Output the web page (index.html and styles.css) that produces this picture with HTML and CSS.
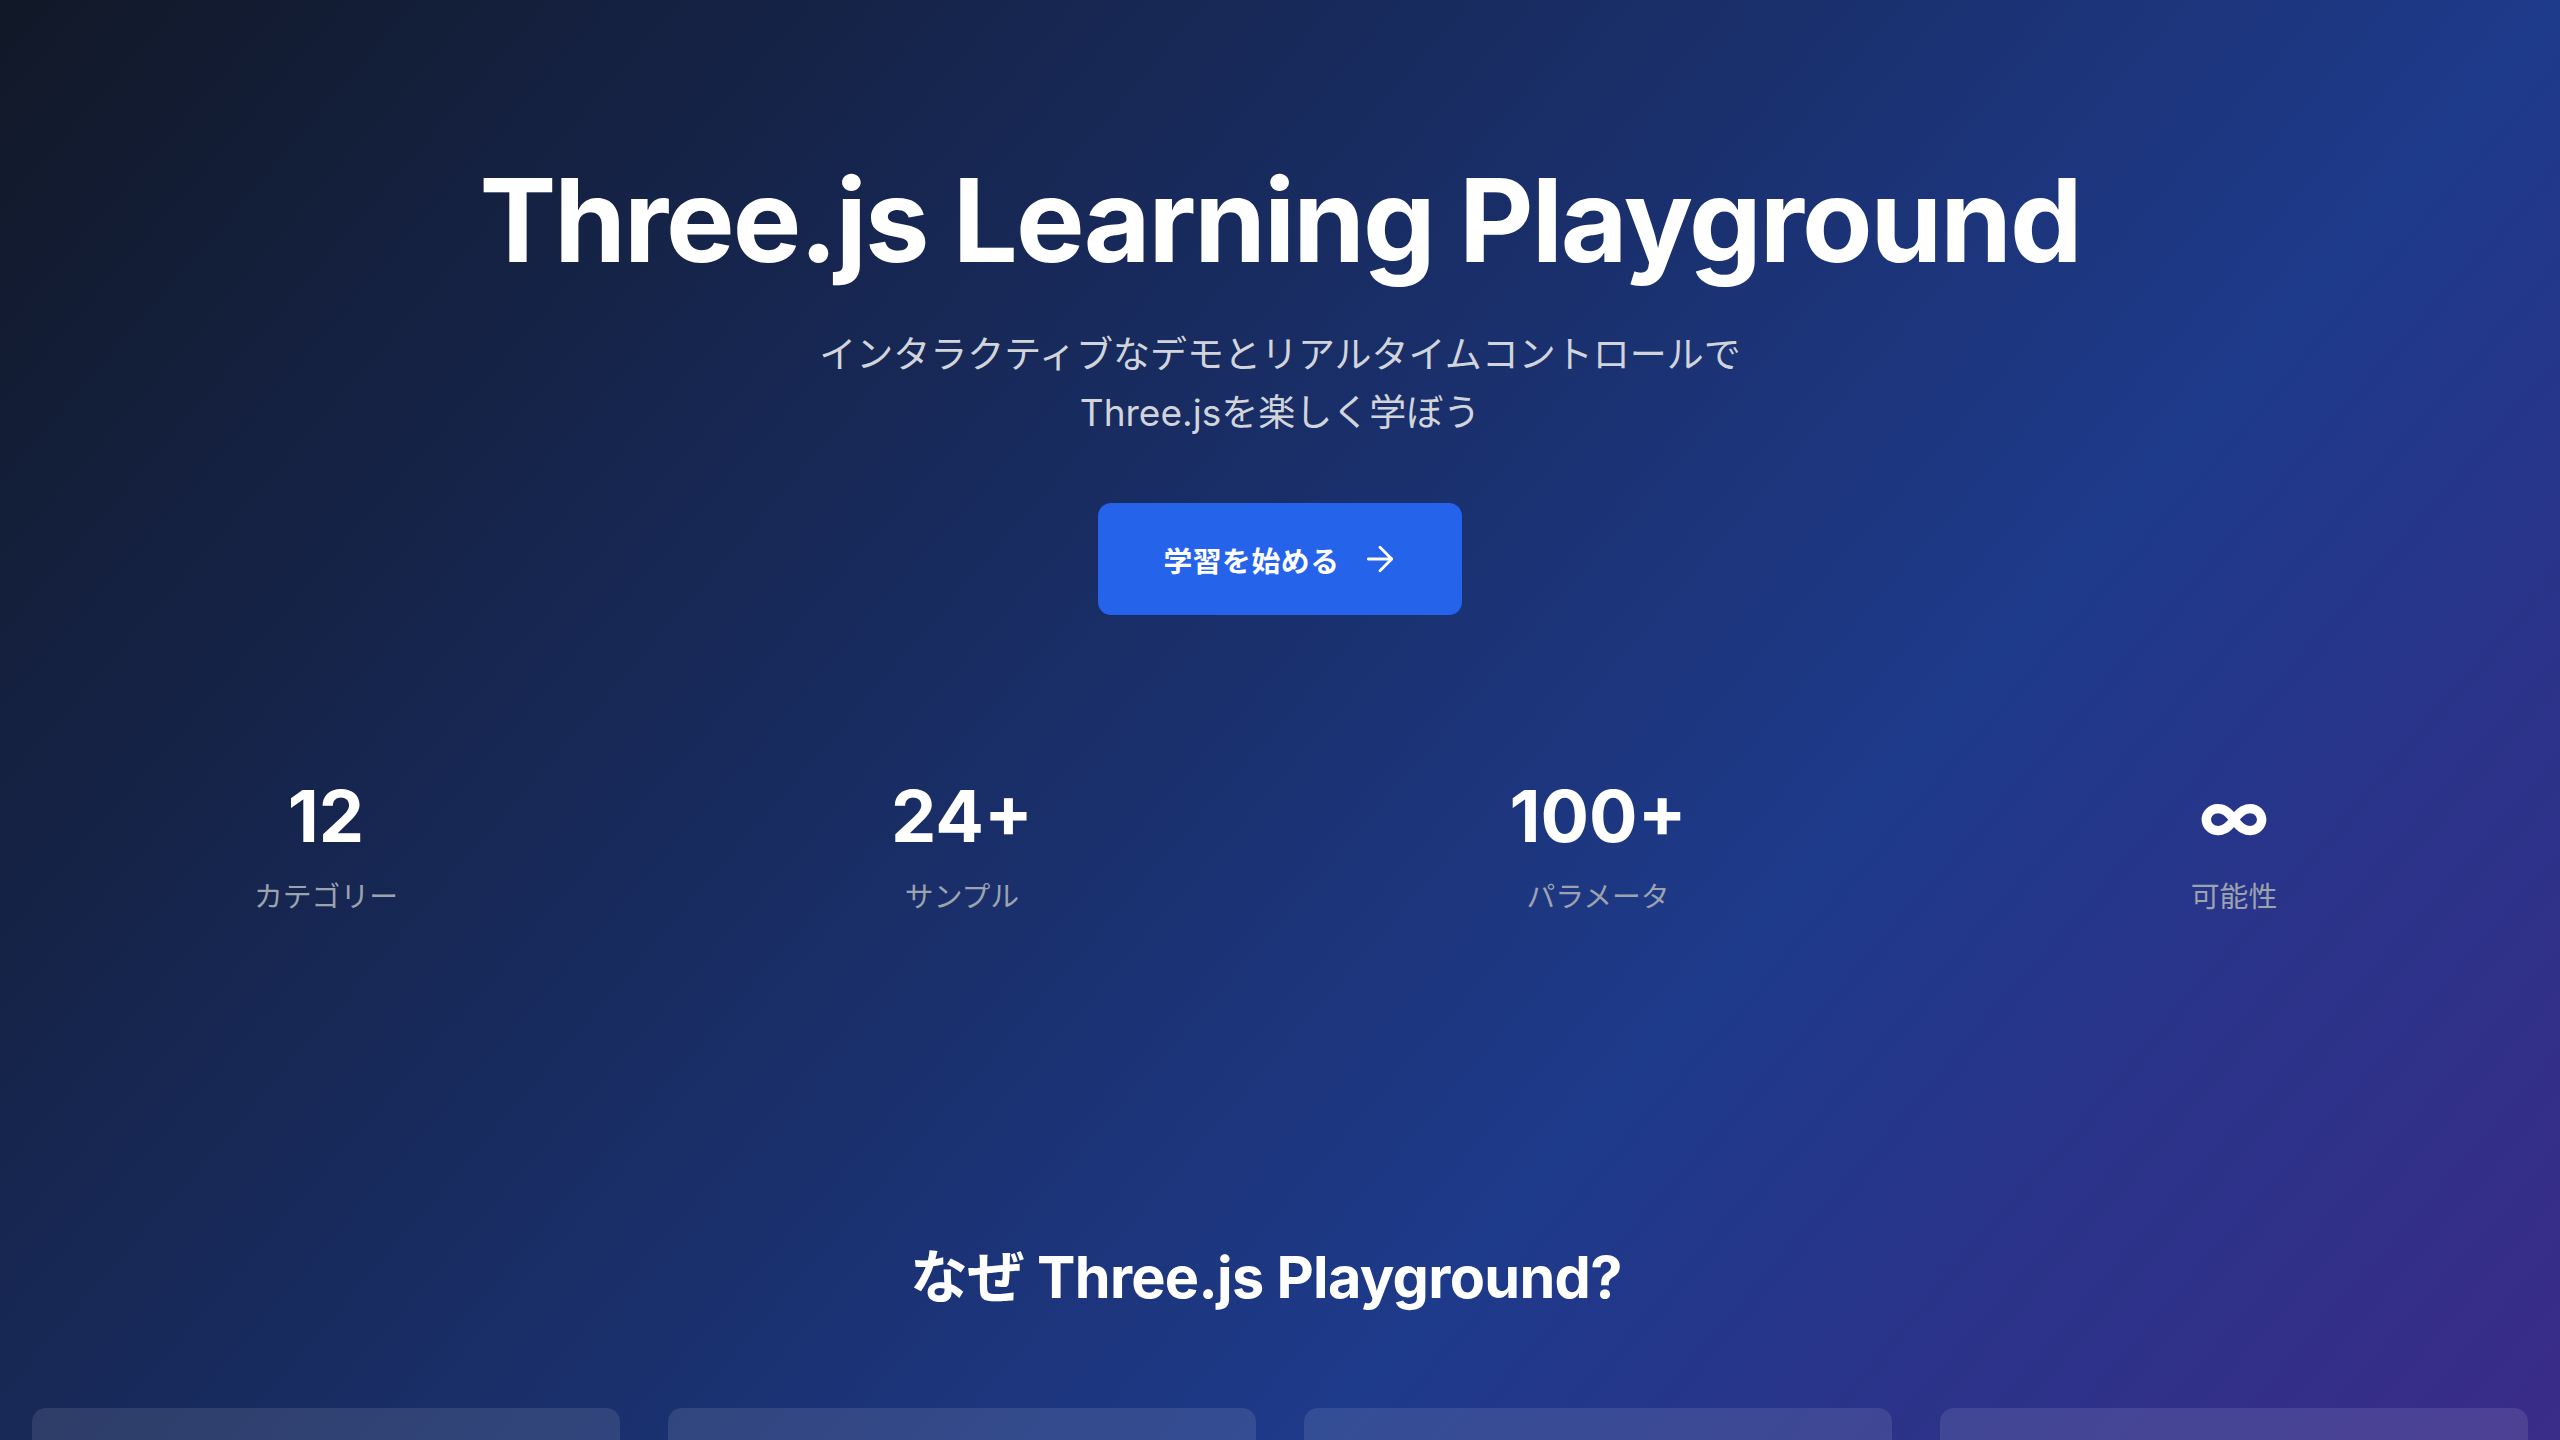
FILE: index.html
```html
<!DOCTYPE html>
<html lang="ja">
<head>
<meta charset="utf-8">
<title>Three.js Learning Playground</title>
<link rel="stylesheet" href="styles.css">
</head>
<body>
<main class="page">
  <section class="hero">
    <h1 class="hero-title">Three.js Learning Playground</h1>
    <p class="hero-sub">インタラクティブなデモとリアルタイムコントロールで<br>Three.jsを楽しく学ぼう</p>
    <a class="cta" href="#features">
      <span>学習を始める</span>
      <svg class="cta-icon" viewBox="0 0 24 24" fill="none" stroke="currentColor" stroke-width="1.7" stroke-linecap="round" stroke-linejoin="round"><path d="M5 12h14"/><path d="m12 5 7 7-7 7"/></svg>
    </a>
  </section>

  <section class="stats">
    <div class="stat"><div class="stat-num">12</div><div class="stat-label">カテゴリー</div></div>
    <div class="stat"><div class="stat-num">24+</div><div class="stat-label">サンプル</div></div>
    <div class="stat"><div class="stat-num">100+</div><div class="stat-label">パラメータ</div></div>
    <div class="stat"><div class="stat-num">∞</div><div class="stat-label">可能性</div></div>
  </section>

  <section class="features" id="features">
    <h2 class="features-title">なぜ Three.js Playground?</h2>
    <div class="feature-grid">
      <div class="feature-card"></div>
      <div class="feature-card"></div>
      <div class="feature-card"></div>
      <div class="feature-card"></div>
    </div>
  </section>
</main>
</body>
</html>
```

FILE: styles.css
```css
html, body {
  margin: 0;
  padding: 0;
}

body {
  font-family: Inter, "Noto Sans CJK JP", "Noto Sans", sans-serif;
  color: #ffffff;
  background-color: #111827;
  background-image: linear-gradient(to bottom right, #111827, #1e3a8a, #581c87);
  background-repeat: no-repeat;
  background-size: 100% 2960px;
  min-height: 100vh;
}

.page {
  display: flex;
  flex-direction: column;
  align-items: stretch;
}

.hero {
  display: flex;
  flex-direction: column;
  align-items: center;
  padding-top: 163px;
  text-align: center;
}

.hero-title {
  margin: 0;
  font-size: 115.2px;
  line-height: 1;
  font-weight: 700;
  letter-spacing: -2px;
}

.hero-sub {
  margin: 48px 0 0;
  font-size: 37px;
  line-height: 57.6px;
  color: #d1d5db;
  font-weight: 400;
}

.cta {
  margin-top: 62px;
  display: inline-flex;
  align-items: center;
  gap: 20px;
  height: 112px;
  box-sizing: border-box;
  padding: 0 62px 0 65px;
  background: #2563eb;
  border-radius: 13px;
  color: #ffffff;
  text-decoration: none;
  font-size: 28.8px;
  font-weight: 600;
  letter-spacing: 0.02em;
}

.cta-icon {
  width: 40px;
  height: 40px;
}

.stats {
  margin-top: 165px;
  padding: 0 32px;
  display: grid;
  grid-template-columns: repeat(4, 1fr);
  gap: 48px;
  text-align: center;
}

.stat-num {
  font-size: 72px;
  line-height: 1;
  font-weight: 700;
}

.stat-label {
  margin-top: 23px;
  font-size: 28.8px;
  line-height: 43.2px;
  color: #9ca3af;
}

.features {
  margin-top: 326px;
  padding: 0 32px;
  display: flex;
  flex-direction: column;
  align-items: stretch;
}

.features-title {
  margin: 0;
  padding-right: 28px;
  text-align: center;
  font-size: 57.6px;
  line-height: 64px;
  font-weight: 700;
  letter-spacing: -0.7px;
}

.feature-grid {
  margin-top: 99px;
  display: grid;
  grid-template-columns: repeat(4, 1fr);
  gap: 48px;
}

.feature-card {
  min-height: 360px;
  border-radius: 14px;
  background: rgba(255, 255, 255, 0.1);
}
```
